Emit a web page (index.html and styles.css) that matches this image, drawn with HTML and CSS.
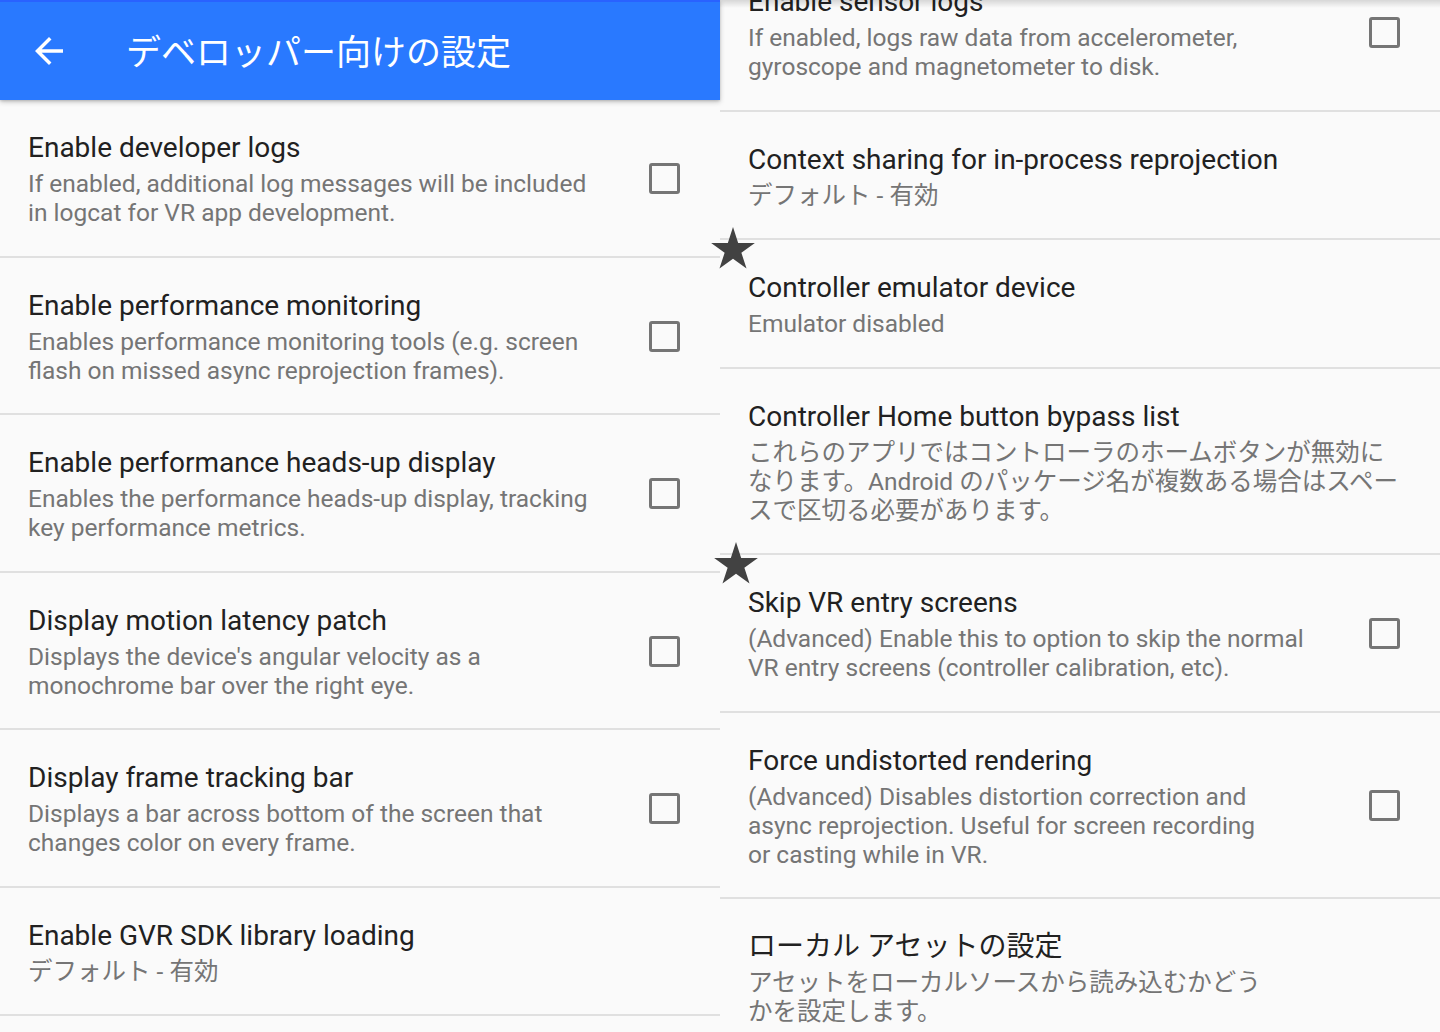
FILE: index.html
```html
<!DOCTYPE html>
<html lang="ja">
<head>
<meta charset="utf-8">
<title>デベロッパー向けの設定</title>
<link rel="stylesheet" href="styles.css">
</head>
<body>
<div class="screen">
  <section class="pane pane-left">
    <header class="appbar">
      <svg class="appbar-back" viewBox="0 0 24 24" aria-hidden="true"><path d="M20 11H7.83l5.59-5.59L12 4l-8 8 8 8 1.41-1.41L7.83 13H20v-2z" fill="#fff"/></svg>
      <h1 class="appbar-title">デベロッパー向けの設定</h1>
    </header>
    <ul class="prefs">
      <li class="pref">
        <div class="pref-text">
          <div class="pref-title">Enable developer logs</div>
          <div class="pref-summary">If enabled, additional log messages will be included in logcat for VR app development.</div>
        </div>
        <span class="checkbox"></span>
      </li>
      <li class="pref">
        <div class="pref-text">
          <div class="pref-title">Enable performance monitoring</div>
          <div class="pref-summary">Enables performance monitoring tools (e.g. screen flash on missed async reprojection frames).</div>
        </div>
        <span class="checkbox"></span>
      </li>
      <li class="pref">
        <div class="pref-text">
          <div class="pref-title">Enable performance heads-up display</div>
          <div class="pref-summary">Enables the performance heads-up display, tracking key performance metrics.</div>
        </div>
        <span class="checkbox"></span>
      </li>
      <li class="pref">
        <div class="pref-text">
          <div class="pref-title">Display motion latency patch</div>
          <div class="pref-summary">Displays the device's angular velocity as a monochrome bar over the right eye.</div>
        </div>
        <span class="checkbox"></span>
      </li>
      <li class="pref">
        <div class="pref-text">
          <div class="pref-title">Display frame tracking bar</div>
          <div class="pref-summary">Displays a bar across bottom of the screen that changes color on every frame.</div>
        </div>
        <span class="checkbox"></span>
      </li>
      <li class="pref">
        <div class="pref-text">
          <div class="pref-title">Enable GVR SDK library loading</div>
          <div class="pref-summary">デフォルト - 有効</div>
        </div>
      </li>
    </ul>
  </section>
  <section class="pane pane-right">
    <ul class="prefs prefs-scrolled">
      <li class="pref">
        <div class="pref-text">
          <div class="pref-title">Enable sensor logs</div>
          <div class="pref-summary">If enabled, logs raw data from accelerometer, gyroscope and magnetometer to disk.</div>
        </div>
        <span class="checkbox"></span>
      </li>
      <li class="pref">
        <div class="pref-text">
          <div class="pref-title">Context sharing for in-process reprojection</div>
          <div class="pref-summary">デフォルト - 有効</div>
        </div>
      </li>
      <li class="pref">
        <svg class="star star-a" viewBox="-25 -25 50 50" aria-hidden="true"><polygon points="0,-23 5.17,-7.12 21.87,-7.11 8.37,2.72 13.52,18.61 0,8.8 -13.52,18.61 -8.37,2.72 -21.87,-7.11 -5.17,-7.12" fill="#424242"/></svg>
        <div class="pref-text">
          <div class="pref-title">Controller emulator device</div>
          <div class="pref-summary">Emulator disabled</div>
        </div>
      </li>
      <li class="pref">
        <div class="pref-text">
          <div class="pref-title">Controller Home button bypass list</div>
          <div class="pref-summary">これらのアプリではコントローラのホームボタンが無効になります。Android のパッケージ名が複数ある場合はスペースで区切る必要があります。</div>
        </div>
      </li>
      <li class="pref">
        <svg class="star star-b" viewBox="-25 -25 50 50" aria-hidden="true"><polygon points="0,-23 5.17,-7.12 21.87,-7.11 8.37,2.72 13.52,18.61 0,8.8 -13.52,18.61 -8.37,2.72 -21.87,-7.11 -5.17,-7.12" fill="#424242"/></svg>
        <div class="pref-text">
          <div class="pref-title">Skip VR entry screens</div>
          <div class="pref-summary">(Advanced) Enable this to option to skip the normal VR entry screens (controller calibration, etc).</div>
        </div>
        <span class="checkbox"></span>
      </li>
      <li class="pref">
        <div class="pref-text">
          <div class="pref-title">Force undistorted rendering</div>
          <div class="pref-summary pref-summary-narrow">(Advanced) Disables distortion correction and async reprojection. Useful for screen recording or casting while in VR.</div>
        </div>
        <span class="checkbox"></span>
      </li>
      <li class="pref">
        <div class="pref-text">
          <div class="pref-title">ローカル アセットの設定</div>
          <div class="pref-summary pref-summary-narrow">アセットをローカルソースから読み込むかどうかを設定します。</div>
        </div>
      </li>
    </ul>
  </section>
</div>
</body>
</html>
```

FILE: styles.css
```css
html, body {
  margin: 0;
  padding: 0;
  width: 1440px;
  height: 1032px;
  overflow: hidden;
  background: #fafafa;
}

body {
  font-family: Roboto, "Noto Sans CJK JP", sans-serif;
  color: #212121;
}

.screen {
  display: grid;
  grid-template-columns: 720px 720px;
  height: 1032px;
}

.pane {
  position: relative;
  background: #fafafa;
  min-width: 0;
}

.pane-right::before {
  content: "";
  position: absolute;
  top: 0;
  left: 0;
  right: 0;
  height: 8px;
  background: linear-gradient(to bottom, rgba(0, 0, 0, 0.14), rgba(0, 0, 0, 0));
  z-index: 3;
}

.appbar {
  position: relative;
  z-index: 1;
  display: flex;
  align-items: center;
  height: 98px;
  border-top: 2px solid #2962ff;
  background: #2979ff;
  box-shadow: 0 2px 5px rgba(0, 0, 0, 0.22), 0 1px 2px rgba(0, 0, 0, 0.12);
}

.appbar-back {
  width: 42px;
  height: 42px;
  margin-left: 28px;
  flex: none;
}

.appbar-title {
  margin: 0 0 2px 56px;
  font-family: "Noto Sans CJK JP", sans-serif;
  font-weight: 400;
  font-size: 35px;
  line-height: 42px;
  color: #ffffff;
}

.prefs {
  list-style: none;
  margin: 0;
  padding: 0;
}

.prefs-scrolled {
  margin-top: -46px;
}

.pref {
  position: relative;
  display: flex;
  align-items: center;
  padding: 30px 40px 28.5px 28px;
  border-bottom: 2px solid #e0e0e0;
}

.pref-text {
  flex: 1;
  min-width: 0;
}

.pref-title {
  font-size: 28px;
  line-height: 36px;
  color: #212121;
}

.pref-summary {
  margin-top: 3px;
  font-size: 24.5px;
  line-height: 29px;
  color: #757575;
}

.pref-summary-narrow {
  max-width: 530px;
}

.checkbox {
  flex: none;
  box-sizing: border-box;
  width: 31px;
  height: 31px;
  margin-left: 51px;
  border: 3.5px solid #757575;
  border-radius: 3px;
}

.star {
  position: absolute;
  width: 50px;
  height: 50px;
  z-index: 2;
}

.star-a {
  top: -15px;
  left: -12px;
}

.star-b {
  top: -15px;
  left: -9px;
}
```
